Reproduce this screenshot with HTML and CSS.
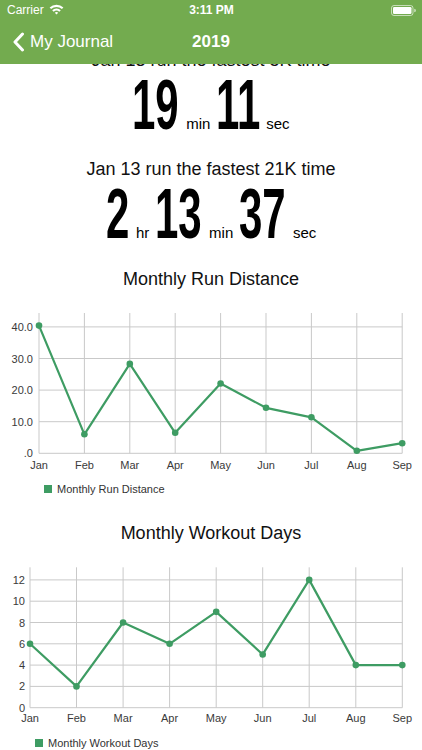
FILE: index.html
```html
<!DOCTYPE html>
<html>
<head>
<meta charset="utf-8">
<link rel="stylesheet" href="styles.css">
</head>
<body>
<header class="header">
  <div class="status">
    <div class="st-left">
      <span class="carrier">Carrier</span>
      <svg class="wifi" width="15" height="11" viewBox="0 0 15 11">
        <path d="M0.6 3.6 A10 10 0 0 1 14.4 3.6 L12.9 5.1 A7.9 7.9 0 0 0 2.1 5.1 Z" fill="#fff"/>
        <path d="M3.2 6.2 A6.3 6.3 0 0 1 11.8 6.2 L10.3 7.7 A4.2 4.2 0 0 0 4.7 7.7 Z" fill="#fff"/>
        <path d="M5.8 8.8 A2.5 2.5 0 0 1 9.2 8.8 L7.5 10.6 Z" fill="#fff"/>
      </svg>
    </div>
    <div class="st-time">3:11 PM</div>
    <div class="st-right">
      <svg class="battery" width="25" height="11" viewBox="0 0 25 11">
        <rect x="0.5" y="0.5" width="21.5" height="10" rx="2.5" fill="none" stroke="#fff" stroke-opacity="0.6"/>
        <rect x="2" y="2" width="18.5" height="7" rx="1.2" fill="#fff"/>
        <path d="M23.2 3.7 a1.6 1.6 0 0 1 0 3.6 Z" fill="#fff" fill-opacity="0.6"/>
      </svg>
    </div>
  </div>
  <nav class="nav">
    <div class="back">
      <svg class="chev" width="13" height="20" viewBox="0 0 13 20">
        <polyline points="10.5,2 3,10 10.5,18" fill="none" stroke="#fff" stroke-width="3" stroke-linecap="round" stroke-linejoin="round"/>
      </svg>
      <span>My Journal</span>
    </div>
    <div class="nav-title">2019</div>
    <div></div>
  </nav>
</header>

<main class="main">
  <p class="label cut">Jan 13 run the fastest 5K time</p>
  <div class="time">
    <span class="big w2">19</span><span class="unit">min</span><span class="big w2">11</span><span class="unit">sec</span>
  </div>

  <p class="label second">Jan 13 run the fastest 21K time</p>
  <div class="time">
    <span class="big w1">2</span><span class="unit">hr</span><span class="big w2">13</span><span class="unit">min</span><span class="big w2">37</span><span class="unit">sec</span>
  </div>

  <h2 class="chart-title first">Monthly Run Distance</h2>
  <svg class="chart c1" width="422" height="200" viewBox="0 0 422 200">
    <g class="grid">
      <line x1="39" y1="13" x2="39" y2="153.3"/>
      <line x1="84.4" y1="13" x2="84.4" y2="153.3"/>
      <line x1="129.8" y1="13" x2="129.8" y2="153.3"/>
      <line x1="175.2" y1="13" x2="175.2" y2="153.3"/>
      <line x1="220.6" y1="13" x2="220.6" y2="153.3"/>
      <line x1="266" y1="13" x2="266" y2="153.3"/>
      <line x1="311.4" y1="13" x2="311.4" y2="153.3"/>
      <line x1="356.8" y1="13" x2="356.8" y2="153.3"/>
      <line x1="402.2" y1="13" x2="402.2" y2="153.3"/>
      <line x1="39" y1="26.9" x2="402.2" y2="26.9"/>
      <line x1="39" y1="58.5" x2="402.2" y2="58.5"/>
      <line x1="39" y1="90.1" x2="402.2" y2="90.1"/>
      <line x1="39" y1="121.7" x2="402.2" y2="121.7"/>
      <line x1="39" y1="153.3" x2="402.2" y2="153.3"/>
    </g>
    <g class="ylab">
      <text x="33" y="30.9">40.0</text>
      <text x="33" y="62.5">30.0</text>
      <text x="33" y="94.1">20.0</text>
      <text x="33" y="125.7">10.0</text>
      <text x="33" y="157.3">.0</text>
    </g>
    <g class="xlab">
      <text x="39" y="169">Jan</text>
      <text x="84.4" y="169">Feb</text>
      <text x="129.8" y="169">Mar</text>
      <text x="175.2" y="169">Apr</text>
      <text x="220.6" y="169">May</text>
      <text x="266" y="169">Jun</text>
      <text x="311.4" y="169">Jul</text>
      <text x="356.8" y="169">Aug</text>
      <text x="402.2" y="169">Sep</text>
    </g>
    <polyline class="series" points="39,25.6 84.4,134.3 129.8,63.9 175.2,132.8 220.6,83.5 266,107.8 311.4,117.3 356.8,150.8 402.2,143.2"/>
    <g class="dots">
      <circle cx="39" cy="25.6" r="3.3"/>
      <circle cx="84.4" cy="134.3" r="3.3"/>
      <circle cx="129.8" cy="63.9" r="3.3"/>
      <circle cx="175.2" cy="132.8" r="3.3"/>
      <circle cx="220.6" cy="83.5" r="3.3"/>
      <circle cx="266" cy="107.8" r="3.3"/>
      <circle cx="311.4" cy="117.3" r="3.3"/>
      <circle cx="356.8" cy="150.8" r="3.3"/>
      <circle cx="402.2" cy="143.2" r="3.3"/>
    </g>
    <rect class="legend-box" x="44" y="185" width="8" height="8"/>
    <text class="legend" x="57" y="193">Monthly Run Distance</text>
  </svg>

  <h2 class="chart-title">Monthly Workout Days</h2>
  <svg class="chart c2" width="422" height="195" viewBox="0 0 422 195">
    <g class="grid">
      <line x1="30" y1="12.3" x2="30" y2="152.7"/>
      <line x1="76.5" y1="12.3" x2="76.5" y2="152.7"/>
      <line x1="123.1" y1="12.3" x2="123.1" y2="152.7"/>
      <line x1="169.6" y1="12.3" x2="169.6" y2="152.7"/>
      <line x1="216.2" y1="12.3" x2="216.2" y2="152.7"/>
      <line x1="262.7" y1="12.3" x2="262.7" y2="152.7"/>
      <line x1="309.2" y1="12.3" x2="309.2" y2="152.7"/>
      <line x1="355.8" y1="12.3" x2="355.8" y2="152.7"/>
      <line x1="402.3" y1="12.3" x2="402.3" y2="152.7"/>
      <line x1="30" y1="24.9" x2="402.3" y2="24.9"/>
      <line x1="30" y1="46.2" x2="402.3" y2="46.2"/>
      <line x1="30" y1="67.5" x2="402.3" y2="67.5"/>
      <line x1="30" y1="88.8" x2="402.3" y2="88.8"/>
      <line x1="30" y1="110.1" x2="402.3" y2="110.1"/>
      <line x1="30" y1="131.4" x2="402.3" y2="131.4"/>
      <line x1="30" y1="152.7" x2="402.3" y2="152.7"/>
    </g>
    <g class="ylab">
      <text x="25" y="28.9">12</text>
      <text x="25" y="50.2">10</text>
      <text x="25" y="71.5">8</text>
      <text x="25" y="92.8">6</text>
      <text x="25" y="114.1">4</text>
      <text x="25" y="135.4">2</text>
      <text x="25" y="156.7">0</text>
    </g>
    <g class="xlab">
      <text x="30" y="167.3">Jan</text>
      <text x="76.5" y="167.3">Feb</text>
      <text x="123.1" y="167.3">Mar</text>
      <text x="169.6" y="167.3">Apr</text>
      <text x="216.2" y="167.3">May</text>
      <text x="262.7" y="167.3">Jun</text>
      <text x="309.2" y="167.3">Jul</text>
      <text x="355.8" y="167.3">Aug</text>
      <text x="402.3" y="167.3">Sep</text>
    </g>
    <polyline class="series" points="30,88.8 76.5,131.4 123.1,67.5 169.6,88.8 216.2,56.85 262.7,99.45 309.2,24.9 355.8,110.1 402.3,110.1"/>
    <g class="dots">
      <circle cx="30" cy="88.8" r="3.3"/>
      <circle cx="76.5" cy="131.4" r="3.3"/>
      <circle cx="123.1" cy="67.5" r="3.3"/>
      <circle cx="169.6" cy="88.8" r="3.3"/>
      <circle cx="216.2" cy="56.85" r="3.3"/>
      <circle cx="262.7" cy="99.45" r="3.3"/>
      <circle cx="309.2" cy="24.9" r="3.3"/>
      <circle cx="355.8" cy="110.1" r="3.3"/>
      <circle cx="402.3" cy="110.1" r="3.3"/>
    </g>
    <rect class="legend-box" x="35" y="184" width="8" height="8"/>
    <text class="legend" x="48" y="192">Monthly Workout Days</text>
  </svg>
</main>
</body>
</html>
```
FILE: styles.css
```css
html, body {
  margin: 0;
  padding: 0;
  height: 100%;
  overflow: hidden;
  background: #fff;
  font-family: "Liberation Sans", Arial, sans-serif;
}

.header {
  background: #73ab4f;
  color: #fff;
  height: 64px;
}

.status {
  height: 20px;
  display: flex;
  align-items: center;
  font-size: 12px;
}

.st-left, .st-right {
  flex: 1;
  display: flex;
  align-items: center;
}

.st-left {
  padding-left: 7px;
  gap: 5px;
}

.st-right {
  justify-content: flex-end;
  padding-right: 6px;
}

.st-time {
  font-weight: bold;
}

.wifi {
  display: block;
  margin-top: -1px;
}

.battery {
  display: block;
}

.nav {
  height: 44px;
  display: grid;
  grid-template-columns: 1fr auto 1fr;
  align-items: center;
}

.back {
  display: flex;
  align-items: center;
  gap: 5px;
  padding-left: 12px;
  font-size: 17px;
}

.chev {
  display: block;
}

.nav-title {
  font-size: 17px;
  font-weight: bold;
}

.main {
  height: 686px;
  overflow: hidden;
}

.label {
  margin: 25px 0 0;
  font-size: 18px;
  line-height: 22px;
  text-align: center;
  color: #111;
}

.label.cut {
  margin-top: -15px;
}

.time {
  display: flex;
  justify-content: center;
  align-items: baseline;
  margin-top: 8px;
  color: #000;
}

.big {
  display: inline-block;
  font-size: 70px;
  line-height: 52px;
  font-weight: bold;
  transform: scaleX(0.6);
  transform-origin: left center;
}

.big.w1 {
  margin-right: -15.6px;
}

.big.w2 {
  margin-right: -31.1px;
}

.unit {
  font-size: 15px;
  line-height: 18px;
  margin: 0 6px 0 7px;
}

.unit:last-child {
  margin-right: 0;
}

.chart-title {
  margin: 22px 0 0;
  font-size: 18px;
  line-height: 22px;
  font-weight: normal;
  text-align: center;
  color: #111;
}

.chart-title.first {
  margin-top: 26px;
}

.chart {
  display: block;
}

.c1 {
  margin-top: 10px;
}

.c2 {
  margin-top: 11px;
}

.grid line {
  stroke: #c9c9c9;
  stroke-width: 1;
}

.ylab text {
  font-size: 11px;
  fill: #3a3a3a;
  text-anchor: end;
}

.xlab text {
  font-size: 11px;
  fill: #3a3a3a;
  text-anchor: middle;
}

.series {
  fill: none;
  stroke: #3e9c63;
  stroke-width: 2.2;
  stroke-linejoin: round;
}

.dots circle {
  fill: #3e9c63;
}

.legend-box {
  fill: #3e9c63;
}

.legend {
  font-size: 11px;
  fill: #333;
}
```
